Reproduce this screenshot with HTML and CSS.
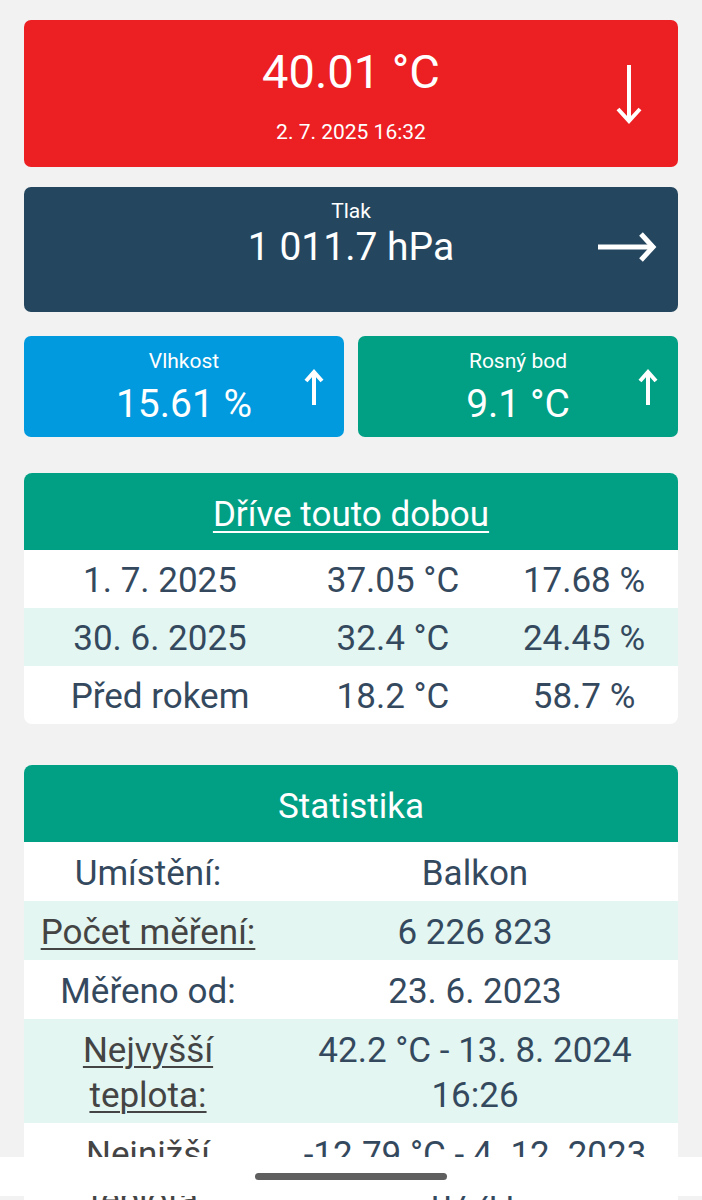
FILE: index.html
```html
<!DOCTYPE html>
<html lang="cs">
<head>
  <meta charset="UTF-8" />
  <meta name="viewport" content="width=device-width, initial-scale=1.0"/>
  <title>Meteostanice Balkon</title>
  <link rel="stylesheet" href="styles.css">
</head>
<body>

    <div class="page">

        <div class="card card-temp">
            <div class="card-main">
                <div class="temp-value">40.01 °C</div>
                <div class="temp-date">2. 7. 2025 16:32</div>
            </div>
            <svg class="trend trend-down" width="28" height="60" viewBox="0 0 28 60">
                <line x1="14" y1="0" x2="14" y2="55"/>
                <polyline points="3,44 14,56 25,44"/>
            </svg>
        </div>

        <div class="card card-pressure">
            <div class="card-main">
                <div class="card-label">Tlak</div>
                <div class="card-value">1 011.7 hPa</div>
            </div>
            <svg class="trend trend-right" width="60" height="30" viewBox="0 0 60 30">
                <line x1="1" y1="15" x2="55" y2="15"/>
                <polyline points="44,2 56,15 44,28"/>
            </svg>
        </div>

        <div class="card-pair">
            <div class="card card-humidity">
                <div class="card-main">
                    <div class="card-label">Vlhkost</div>
                    <div class="card-value">15.61 %</div>
                </div>
                <svg class="trend trend-up" width="20" height="38" viewBox="0 0 20 38">
                    <line x1="10" y1="36" x2="10" y2="3"/>
                    <polyline points="2,12 10,3 18,12"/>
                </svg>
            </div>
            <div class="card card-dew">
                <div class="card-main">
                    <div class="card-label">Rosný bod</div>
                    <div class="card-value">9.1 °C</div>
                </div>
                <svg class="trend trend-up" width="20" height="38" viewBox="0 0 20 38">
                    <line x1="10" y1="36" x2="10" y2="3"/>
                    <polyline points="2,12 10,3 18,12"/>
                </svg>
            </div>
        </div>

        <div class="panel panel-history">
            <div class="panel-head"><a href="#">Dříve touto dobou</a></div>
            <div class="history-row">
                <span>1. 7. 2025</span><span>37.05 °C</span><span>17.68 %</span>
            </div>
            <div class="history-row">
                <span>30. 6. 2025</span><span>32.4 °C</span><span>24.45 %</span>
            </div>
            <div class="history-row">
                <span>Před rokem</span><span>18.2 °C</span><span>58.7 %</span>
            </div>
        </div>

        <div class="panel panel-stats">
            <div class="panel-head">Statistika</div>
            <div class="stats-row">
                <span>Umístění:</span><span>Balkon</span>
            </div>
            <div class="stats-row">
                <span><a href="#">Počet měření:</a></span><span>6 226 823</span>
            </div>
            <div class="stats-row">
                <span>Měřeno od:</span><span>23. 6. 2023</span>
            </div>
            <div class="stats-row">
                <span><a href="#">Nejvyšší teplota:</a></span><span>42.2 °C - 13. 8. 2024 16:26</span>
            </div>
            <div class="stats-row">
                <span><a href="#">Nejnižší teplota:</a></span><span>-12.79 °C - 4. 12. 2023 07:41</span>
            </div>
            <div class="stats-row">
                <span>Průměrná teplota:</span><span>13.4 °C</span>
            </div>
        </div>

    </div>

    <div class="nav-bar"><div class="nav-handle"></div></div>

</body>
</html>
```

FILE: styles.css
```css
body
 {
   margin: 0;
   padding: 0;
   font-family: Roboto, 'Noto Sans', sans-serif;
   background: #f2f2f2;
   color: #34495e;
 }

 .page
 {
   padding: 20px 24px 80px;
 }

 /* top cards */
 .card
 {
   display: grid;
   grid-template-columns: 1fr auto 1fr;
   align-items: center;
   border-radius: 7px;
   color: #fff;
 }

 .card-main
 {
   grid-column: 2;
   text-align: center;
 }

 .trend
 {
   grid-column: 3;
   justify-self: end;
   fill: none;
   stroke: #fff;
   stroke-width: 4;
 }

 .card-temp
 {
   background: #ec1f23;
   padding: 25px 0 22px;
 }

 .temp-value
 {
   font-size: 47px;
   line-height: 54px;
 }

 .temp-date
 {
   font-size: 21px;
   line-height: 25px;
   margin-top: 21px;
 }

 .trend-down
 {
   margin-right: 35px;
 }

 .card-pressure
 {
   background: #24475f;
   margin-top: 20px;
   padding: 12px 0 43px;
 }

 .card-label
 {
   font-size: 21px;
   line-height: 25px;
 }

 .card-value
 {
   font-size: 39px;
   line-height: 44px;
   margin-top: 1px;
 }

 .card-pressure .trend
 {
   align-self: start;
   margin-top: 33px;
 }

 .trend-right
 {
   margin-right: 21px;
   stroke-width: 5;
 }

 .card-pair
 {
   display: grid;
   grid-template-columns: 1fr 1fr;
   gap: 14px;
   margin-top: 24px;
 }

 .card-pair .card
 {
   padding: 13px 0 11px;
 }

 .card-pair .card-value
 {
   margin-top: 8px;
 }

 .card-humidity
 {
   background: #029ade;
 }

 .card-dew
 {
   background: #01a085;
 }

 .trend-up
 {
   margin-right: 20px;
 }

 /* tables */
 .panel
 {
   background: #fff;
   border-radius: 8px;
   overflow: hidden;
 }

 .panel-history
 {
   margin-top: 36px;
 }

 .panel-stats
 {
   margin-top: 41px;
 }

 .panel-head
 {
   box-sizing: border-box;
   background: #01a085;
   color: #fff;
   height: 77px;
   padding-top: 5px;
   display: flex;
   justify-content: center;
   align-items: center;
   font-size: 35px;
 }

 .panel-head a
 {
   color: #fff;
   text-decoration: underline;
   text-decoration-thickness: 2px;
   text-underline-offset: 5px;
 }

 .history-row, .stats-row
 {
   display: grid;
   text-align: center;
   font-size: 35px;
   line-height: 44px;
   padding: 9px 0 5px;
 }

 .history-row
 {
   grid-template-columns: 272px 194px 1fr;
 }

 .stats-row
 {
   grid-template-columns: 248px 1fr;
   line-height: 45px;
 }

 .stats-row span
 {
   padding: 0 10px;
 }

 .history-row:nth-child(odd), .stats-row:nth-child(odd)
 {
   background: #e3f6f1;
 }

 .stats-row a
 {
   color: #444;
   text-decoration: underline;
   text-decoration-thickness: 2px;
   text-underline-offset: 4px;
 }

 /* system navigation bar */
 .nav-bar
 {
   position: fixed;
   left: 0;
   right: 0;
   bottom: 4px;
   height: 39px;
   background: #fff;
   display: flex;
   justify-content: center;
   align-items: center;
 }

 .nav-handle
 {
   width: 192px;
   height: 7px;
   border-radius: 4px;
   background: #5f5f5f;
 }
```
